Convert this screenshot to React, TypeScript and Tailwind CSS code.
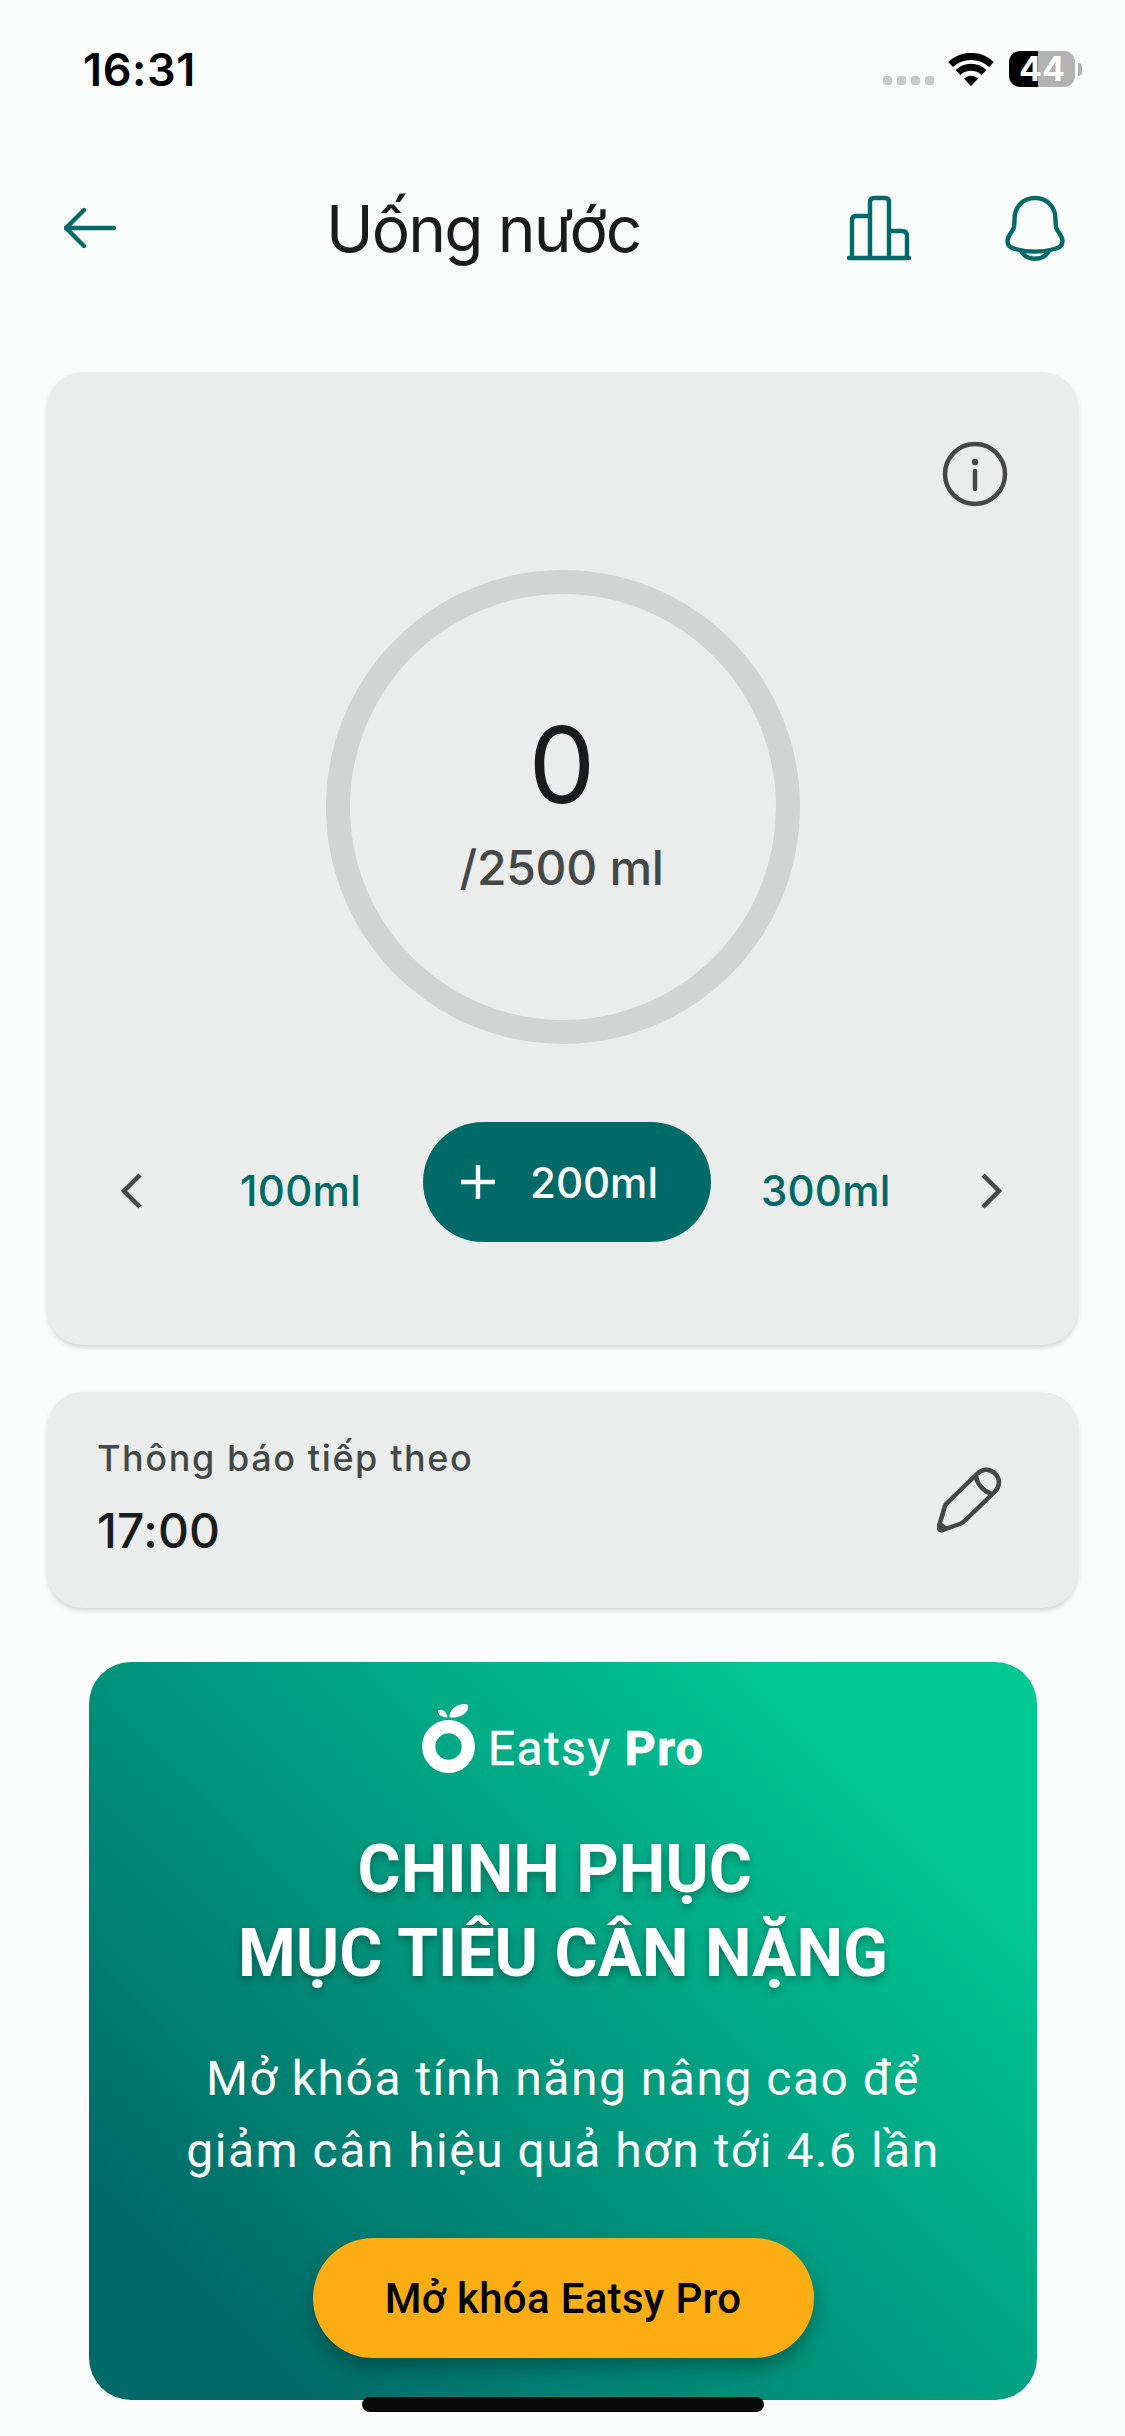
/** @module App - Water tracking screen with intake ring, next reminder and upgrade banner */

import type { ReactNode } from 'react';

const quickAmounts = { previous: '100ml', current: '200ml', next: '300ml' } as const;

/** Phone status bar: clock, signal, wifi and battery level. */
function StatusBar() {
  return (
    <div className="flex h-[138px] items-center justify-between pl-[83px] pr-[43px]">
      <span className="text-[45px] font-semibold leading-none tracking-[0.600px] text-black">16:31</span>
      <div className="flex items-center">
        <div className="mt-[23px] flex gap-[5px]">
          <i className="size-[9px] rounded-[3px] bg-[#c9cbca]" />
          <i className="size-[9px] rounded-[3px] bg-[#c9cbca]" />
          <i className="size-[9px] rounded-[3px] bg-[#c9cbca]" />
          <i className="size-[9px] rounded-[3px] bg-[#c9cbca]" />
        </div>
        <svg className="ml-[14px] h-[33px] w-[46px]" viewBox="0 0 46 33" fill="none" aria-hidden="true">
          <path d="M2.500 11.500a30 30 0 0 1 41 0" stroke="black" strokeWidth="7" />
          <path d="M10 19.500a19 19 0 0 1 26 0" stroke="black" strokeWidth="7" />
          <path d="M23 33l-7-7.500a10.500 10.500 0 0 1 14 0z" fill="black" />
        </svg>
        <div className="ml-[15px] flex h-9 w-[66px] items-center justify-center rounded-[11px] bg-[linear-gradient(90deg,#000_44%,#b1b2b1_44%)] text-[34px] font-bold leading-none text-white">
          44
        </div>
        <i className="ml-[3px] h-[13px] w-1 rounded-r-full bg-[#b1b2b1]" />
      </div>
    </div>
  );
}

function Header() {
  return (
    <header className="flex h-[180px] items-center pl-[64px] pr-[60px]">
      <svg className="h-[44px] w-[54px]" viewBox="0 0 54 44" fill="none" stroke="#006a68" strokeWidth="4.400" strokeLinecap="round" strokeLinejoin="round">
        <path d="M20 4 2 22l18 18M2 22h48" />
      </svg>
      <h1 className="ml-[208px] mt-[2px] text-[64px] leading-none tracking-[-1.850px] text-[#191c1c]">Uống nước</h1>
      <svg className="ml-auto h-[66px] w-[66px]" viewBox="0 0 66 66" fill="none" stroke="#006a68" strokeWidth="4.400" strokeLinecap="round" strokeLinejoin="round">
        <path d="M2 63h60M5 63V25q0-4 4-4h14M23 63V7q0-4 4-4h11q4 0 4 4v56M42 36h13q5 0 5 5v22" />
      </svg>
      <svg className="ml-[92px] h-[66px] w-[60px]" viewBox="0 0 60 66" fill="none" stroke="#006a68" strokeWidth="4.400" strokeLinejoin="round">
        <path d="M30 3C18 3 9.500 12 9.500 24c0 8-.5 10-4 14.500-2 3-3 4.500-3 7.500 0 5 3 7 8 8 13 3.500 26 3.500 39 0 5-1 8-3 8-8 0-3-1-4.500-3-7.500-3.500-4.500-4-6.500-4-14.500C50.500 12 42 3 30 3Z" />
        <path d="M16 55.500c5 11 23 11 28 0" />
      </svg>
    </header>
  );
}

function Card({ className, children }: { className: string; children: ReactNode }) {
  return (
    <section className={`mx-[47px] rounded-[36px] bg-[#ebedec] shadow-[0_3px_5px_rgba(0,0,0,0.14)] ${className}`}>
      {children}
    </section>
  );
}

function IntakeCard() {
  return (
    <Card className="mt-[54px] flex h-[973px] flex-col">
      <svg className="ml-auto mr-[70px] mt-[69px] size-[66px] shrink-0" viewBox="0 0 66 66" fill="none" stroke="#444947" strokeWidth="4.500" strokeLinecap="round">
        <circle cx="33" cy="33" r="30" />
        <path d="M33 30v18" />
        <circle cx="33" cy="21" r="3.200" fill="#444947" stroke="none" />
      </svg>

      {/* Progress ring */}
      <div className="ml-[279px] mt-[63px] flex size-[474px] shrink-0 flex-col items-center rounded-full border-[24px] border-[#d2d4d3] pt-[116px]">
        <span className="-ml-[2px] text-[106px] leading-[110px] text-[#191c1c]">0</span>
        <span className="mt-[18px] -ml-[3px] text-[48px] font-medium leading-[60px] tracking-[-0.300px] text-[#444947]">
          /2500 ml
        </span>
      </div>

      {/* Amount picker */}
      <div className="mt-[78px] flex h-[120px] items-center text-[42px] font-medium text-[#006a68]">
        <svg className="ml-[73px] mt-[18px] h-9 w-6" viewBox="0 0 24 36" fill="none" stroke="#444947" strokeWidth="4.400">
          <path d="M20 2 4 18l16 16" />
        </svg>
        <span className="ml-[96px] mt-[17px] w-[124px] tracking-[0.300px]">{quickAmounts.previous}</span>
        <button className="ml-[59px] flex h-[120px] w-[288px] items-center rounded-full bg-[#006a68] pl-[38px] text-white">
          <svg className="size-[34px]" viewBox="0 0 34 34" stroke="white" strokeWidth="4.400">
            <path d="M17 0v34M0 17h34" />
          </svg>
          <span className="ml-[35px]">{quickAmounts.current}</span>
        </button>
        <span className="ml-[50px] mt-[17px] w-[130px] tracking-[0.200px]">{quickAmounts.next}</span>
        <svg className="ml-[88px] mt-[18px] h-9 w-6" viewBox="0 0 24 36" fill="none" stroke="#444947" strokeWidth="4.400">
          <path d="m4 2 16 16L4 34" />
        </svg>
      </div>
    </Card>
  );
}

function ReminderCard() {
  return (
    <Card className="mt-[47px] flex h-[216px] items-center justify-between pl-[50px] pr-[75px]">
      <div className="flex flex-col">
        <span className="-mt-[6px] text-[36px] font-medium leading-[48px] tracking-[1.600px] text-[#444947]">
          Thông báo tiếp theo
        </span>
        <span className="mt-[19px] text-[48px] font-medium leading-[60px] tracking-[0.200px] text-[#191c1c]">17:00</span>
      </div>
      <svg className="size-[66px]" viewBox="0 0 66 66" fill="none" stroke="#444947" strokeWidth="4.500" strokeLinecap="round" strokeLinejoin="round">
        <path d="M9 37 40 7c5-5 12-6 17.500-1 6 5.500 5.500 13 1 18L27.500 54 24 56.500 6 63c-3 1-4.500-1-4-4L8 39zM39 9c1 8 7 15 15 17.500" />
        <path d="m3 57 5 4-5 1.500z" fill="#444947" />
      </svg>
    </Card>
  );
}

/** Upgrade banner with brand mark and call to action. */
function ProBanner() {
  return (
    <section className="mx-[89px] mt-[54px] flex h-[738px] w-[948px] flex-col items-center rounded-[42px] bg-[linear-gradient(45deg,#006a68_13%,#00c994_86%)] font-[Roboto,sans-serif] text-white">
      <div className="mt-[40px] flex h-[72px] items-end gap-[12px]">
        <svg className="h-[70px] w-[54px]" viewBox="0 0 54 70" fill="white">
          <circle cx="26.500" cy="42.500" r="19.800" fill="none" stroke="white" strokeWidth="13.200" />
          <path d="M27.500 13.500C27 7 33 0 43 0c4 0 4 4 1.500 7.500C41 12 35 14 27.500 13.500ZM25.500 13.500C20 13.500 15.500 10 16 7c2-3 9-.5 9.500 6.500Z" />
        </svg>
        <span className="mb-[-1px] text-[48px] leading-[52px] tracking-[1.400px] [-webkit-text-stroke:0.500px_white]">
          Eatsy <b className="font-extrabold">Pro</b>
        </span>
      </div>
      <h2 className="mt-[54px] whitespace-pre text-center text-[66px] font-bold leading-[84px] [text-shadow:0_4px_8px_rgba(0,0,0,0.3)]">
        {'CHINH PHỤC \nMỤC TIÊU CÂN NẶNG'}
      </h2>
      <p className="mt-[47px] text-center text-[48px] leading-[72px] tracking-[1.500px]">
        Mở khóa tính năng nâng cao để
        <br />
        giảm cân hiệu quả hơn tới 4.6 lần
      </p>
      <button className="mt-[51px] h-[120px] w-[501px] rounded-full bg-[#fcad14] text-[42px] font-medium tracking-[0.300px] text-black shadow-[0_10px_18px_rgba(0,0,0,0.28)]">
        Mở khóa Eatsy Pro
      </button>
    </section>
  );
}

function App() {
  return (
    <main className="relative h-[2436px] w-[1125px] overflow-hidden bg-[#fbfdfc] font-[Inter,sans-serif]">
      <StatusBar />
      <Header />
      <IntakeCard />
      <ReminderCard />
      <ProBanner />
      {/* Home indicator */}
      <div className="absolute bottom-6 left-[362px] h-[15px] w-[402px] rounded-full bg-[#0a0a0a]" />
    </main>
  );
}

export default App;
